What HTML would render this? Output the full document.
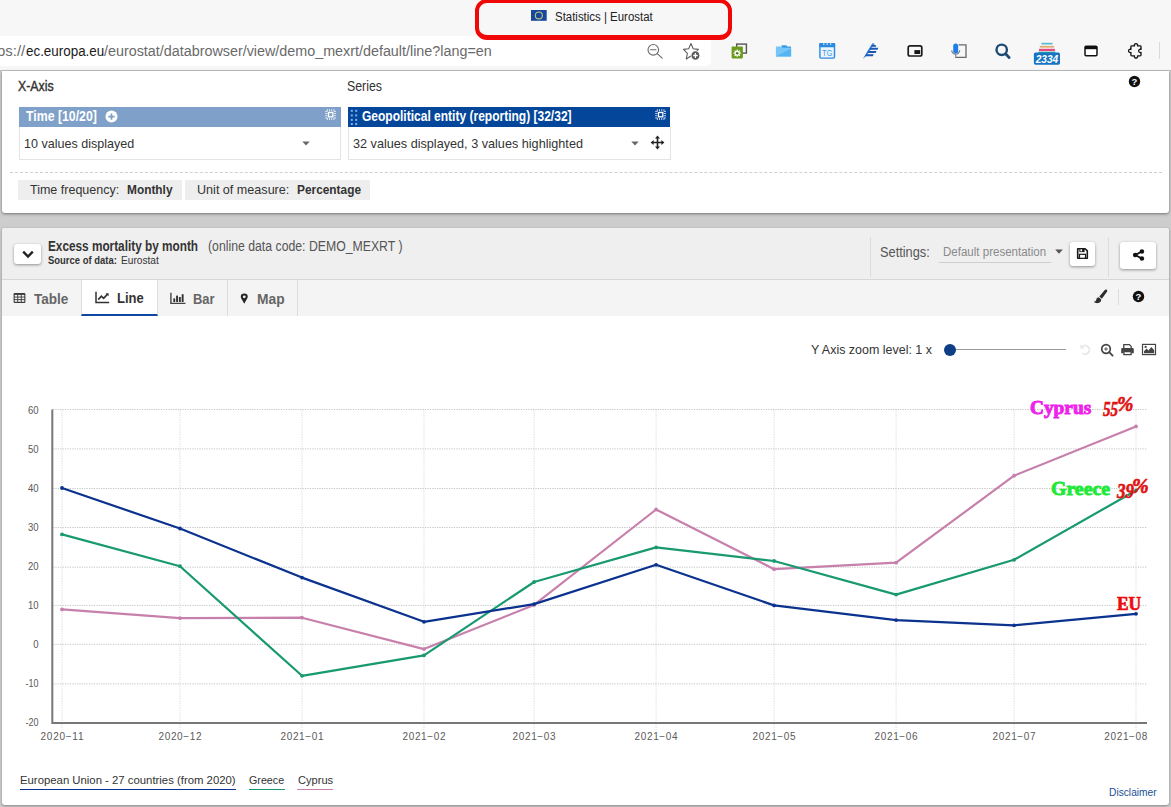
<!DOCTYPE html>
<html lang="en"><head><meta charset="utf-8"><title>Statistics | Eurostat</title>
<style>
*{box-sizing:border-box;margin:0;padding:0}
html,body{width:1171px;height:807px;overflow:hidden;background:#cdcdcd;font-family:"Liberation Sans",sans-serif;color:#333}
.a{position:absolute}
.t{position:absolute;white-space:nowrap;line-height:1;transform-origin:0 50%}
#chrome{left:0;top:0;width:1171px;height:70px;background:#f7f7f7}
#addr{left:-20px;top:36px;width:731px;height:30px;background:#fff;border-radius:0 5px 5px 0}
#chromeline{left:0;top:70px;width:1171px;height:1px;background:#c2c2c2}
#redbox{left:475px;top:-1.500px;width:257px;height:41px;border:4.800px solid #f00808;border-bottom-width:5.400px;border-radius:12px}
#card1{left:2px;top:71px;width:1167px;height:142px;background:#fff;border-radius:0 0 3px 3px;box-shadow:0 1px 3px rgba(0,0,0,.45)}
#card2{left:2px;top:228px;width:1167px;height:577px;background:#fff;border-radius:3px;box-shadow:0 1px 3px rgba(0,0,0,.35);overflow:hidden}
.hdr{height:20px;color:#fff;font-weight:bold}
.box{background:#fff;border:1px solid #e4e4e4;border-top:none}
.chip{background:#eee;height:20px;top:180px}
.btn{background:#fff;border-radius:3px;box-shadow:0 1px 3px rgba(0,0,0,.4)}
</style></head><body>
<div class="a" id="chrome"></div>
<div class="a" id="addr"></div>
<div class="a" id="chromeline"></div>
<div class="a" id="redbox"></div>
<div class="a" id="card1"></div>
<div class="a" id="card2"></div>

<!-- browser chrome -->
<svg class="a" style="left:531.200px;top:10.400px" width="15.700" height="10.800" viewBox="0 0 15.700 10.800"><rect width="15.700" height="10.800" fill="#17479e"/><circle cx="7.850" cy="5.400" r="3.500" fill="none" stroke="#c3cb72" stroke-width="1.050"/></svg>
<span class="t" id="tabtitle" style="left:555.3px;top:11px;font-size:12px;color:#222;transform:scaleX(0.953)">Statistics | Eurostat</span>
<span class="t" id="url1" style="left:-3.5px;top:44px;font-size:14px;color:#6a6a6a;transform:scaleX(1.069)">ps://</span>
<span class="t" id="url2" style="left:25.6px;top:44px;font-size:14px;color:#1b1b1b;transform:scaleX(0.957)">ec.europa.eu</span>
<span class="t" id="url3" style="left:104.3px;top:44px;font-size:14px;color:#6a6a6a;transform:scaleX(1.024)">/eurostat/databrowser/view/demo_mexrt/default/line?lang=en</span>

<!-- card 1 -->
<span class="t" id="xaxis" style="left:18.0px;top:79px;font-size:14px;color:#333;-webkit-text-stroke:0.400px #333;transform:scaleX(0.880)">X-Axis</span>
<span class="t" id="series" style="left:347.0px;top:79px;font-size:14px;color:#333;transform:scaleX(0.882)">Series</span>
<div class="a hdr" style="left:19px;top:107px;width:321.500px;background:#7fa1c9"></div>
<div class="a box" style="left:18.500px;top:127px;width:322.500px;height:33px"></div>
<span class="t" id="time" style="left:26.0px;top:109.200px;font-size:14px;font-weight:bold;color:#fff;transform:scaleX(0.878)">Time [10/20]</span>
<span class="t" id="v10" style="left:24.0px;top:137px;font-size:13.5px;color:#333;transform:scaleX(0.929)">10 values displayed</span>
<div class="a hdr" style="left:348px;top:107px;width:322px;background:#04469a"></div>
<div class="a box" style="left:347.500px;top:127px;width:323.500px;height:33px"></div>
<span class="t" id="geo" style="left:362.0px;top:109.100px;font-size:14px;font-weight:bold;color:#fff;transform:scaleX(0.858)">Geopolitical entity (reporting) [32/32]</span>
<span class="t" id="v32" style="left:352.5px;top:137px;font-size:13.5px;color:#333;transform:scaleX(0.937)">32 values displayed, 3 values highlighted</span>
<div class="a" style="left:10px;top:172px;width:1152px;height:0;border-top:1px dashed #d0d0d0"></div>
<div class="a chip" style="left:18px;width:164px"></div>
<div class="a chip" style="left:185px;width:185px"></div>
<span class="t" id="tf" style="left:29.7px;top:183px;font-size:13.5px;color:#333;transform:scaleX(0.926)">Time frequency:</span>
<span class="t" id="monthly" style="left:126.5px;top:183px;font-size:13.5px;font-weight:bold;color:#333;transform:scaleX(0.879)">Monthly</span>
<span class="t" id="um" style="left:197.2px;top:183px;font-size:13.5px;color:#333;transform:scaleX(0.932)">Unit of measure:</span>
<span class="t" id="pct" style="left:297.0px;top:183px;font-size:13.5px;font-weight:bold;color:#333;transform:scaleX(0.879)">Percentage</span>


<!-- card1 icons -->
<svg class="a" style="left:105px;top:110px" width="13" height="13" viewBox="0 0 13 13"><circle cx="6.5" cy="6.6" r="6" fill="#fff"/><path d="M3.3 6.6h6.4M6.5 3.4v6.4" stroke="#7fa1c9" stroke-width="1.8"/></svg>
<svg class="a" style="left:325px;top:108.500px" width="11.300" height="11.300" viewBox="0 0 11.300 11.300"><g fill="#fff" opacity="0.850"><rect x="1.9" y="0.200" width="0.900" height="2.200"/><rect x="1.9" y="8.900" width="0.900" height="2.200"/><rect x="0.200" y="1.9" width="2.200" height="0.900"/><rect x="8.900" y="1.9" width="2.200" height="0.900"/><rect x="4.1" y="0.200" width="0.900" height="2.200"/><rect x="4.1" y="8.900" width="0.900" height="2.200"/><rect x="0.200" y="4.1" width="2.200" height="0.900"/><rect x="8.900" y="4.1" width="2.200" height="0.900"/><rect x="6.3" y="0.200" width="0.900" height="2.200"/><rect x="6.3" y="8.900" width="0.900" height="2.200"/><rect x="0.200" y="6.3" width="2.200" height="0.900"/><rect x="8.900" y="6.3" width="2.200" height="0.900"/><rect x="8.5" y="0.200" width="0.900" height="2.200"/><rect x="8.5" y="8.900" width="0.900" height="2.200"/><rect x="0.200" y="8.5" width="2.200" height="0.900"/><rect x="8.900" y="8.5" width="2.200" height="0.900"/></g><rect x="3.500" y="3.500" width="4.300" height="4.300" fill="none" stroke="#fff" stroke-width="1.300"/></svg>
<svg class="a" style="left:655px;top:108.500px" width="11.300" height="11.300" viewBox="0 0 11.300 11.300"><g fill="#fff" opacity="0.850"><rect x="1.9" y="0.200" width="0.900" height="2.200"/><rect x="1.9" y="8.900" width="0.900" height="2.200"/><rect x="0.200" y="1.9" width="2.200" height="0.900"/><rect x="8.900" y="1.9" width="2.200" height="0.900"/><rect x="4.1" y="0.200" width="0.900" height="2.200"/><rect x="4.1" y="8.900" width="0.900" height="2.200"/><rect x="0.200" y="4.1" width="2.200" height="0.900"/><rect x="8.900" y="4.1" width="2.200" height="0.900"/><rect x="6.3" y="0.200" width="0.900" height="2.200"/><rect x="6.3" y="8.900" width="0.900" height="2.200"/><rect x="0.200" y="6.3" width="2.200" height="0.900"/><rect x="8.900" y="6.3" width="2.200" height="0.900"/><rect x="8.5" y="0.200" width="0.900" height="2.200"/><rect x="8.5" y="8.900" width="0.900" height="2.200"/><rect x="0.200" y="8.5" width="2.200" height="0.900"/><rect x="8.900" y="8.5" width="2.200" height="0.900"/></g><rect x="3.500" y="3.500" width="4.300" height="4.300" fill="none" stroke="#fff" stroke-width="1.300"/></svg>
<svg class="a" style="left:302px;top:140.500px" width="8" height="5" viewBox="0 0 8 5"><path d="M0.3 0.5h7.4L4 4.6z" fill="#666"/></svg>
<svg class="a" style="left:630.800px;top:140.500px" width="8" height="5" viewBox="0 0 8 5"><path d="M0.3 0.5h7.4L4 4.6z" fill="#666"/></svg>
<svg class="a" style="left:350px;top:109px" width="8" height="17" viewBox="0 0 8 17"><g fill="#7fb0ea"><rect x="0.8" y="0.8" width="2" height="2"/><rect x="5.2" y="0.8" width="2" height="2"/><rect x="0.8" y="5.4" width="2" height="2"/><rect x="5.2" y="5.4" width="2" height="2"/><rect x="0.8" y="9.9" width="2" height="2"/><rect x="5.2" y="9.9" width="2" height="2"/><rect x="0.8" y="14" width="2" height="2"/><rect x="5.2" y="14" width="2" height="2"/></g></svg>
<svg class="a" style="left:650px;top:135px" width="15" height="15" viewBox="0 0 15 15"><path d="M7.5 0.6L10 3.6H8.3V6.7H11.4V5L14.4 7.5L11.4 10V8.3H8.3V11.4H10L7.5 14.4L5 11.4H6.7V8.3H3.6V10L0.6 7.5L3.6 5V6.7H6.7V3.6H5z" fill="#222"/></svg>
<svg class="a" style="left:1128px;top:75px" width="13" height="13" viewBox="0 0 13 13"><circle cx="6.5" cy="6.5" r="5.7" fill="#111"/><text x="6.5" y="10" font-size="9.5" font-weight="bold" font-family="Liberation Sans, sans-serif" fill="#fff" text-anchor="middle">?</text></svg>


<!-- chrome icons -->
<svg class="a" style="left:645px;top:42px" width="20" height="18" viewBox="0 0 20 18"><circle cx="8.3" cy="7.8" r="5.3" fill="none" stroke="#6b6b6b" stroke-width="1.1"/><path d="M5.6 7.8h5.4M12.2 11.6l5 4.6" stroke="#6b6b6b" stroke-width="1.1" fill="none" stroke-linecap="round"/></svg>
<svg class="a" style="left:682px;top:42px" width="20.500" height="21" viewBox="0 0 22 21" preserveAspectRatio="none"><path d="M9.6 1.6l2.4 5.2 5.6.6-4.2 3.9 1.2 5.6-5-2.9-5 2.9 1.2-5.6L1.6 7.4l5.6-.6z" fill="none" stroke="#555" stroke-width="1.1" stroke-linejoin="round"/><circle cx="14.400" cy="13.500" r="5" fill="#fff"/><circle cx="14.400" cy="13.500" r="4.300" fill="#5a5a5a"/><path d="M12 13.500h4.800M14.400 11.100v4.800" stroke="#fff" stroke-width="1.300"/></svg>
<svg class="a" style="left:730px;top:42px" width="18" height="18" viewBox="0 0 18 18"><rect x="6.700" y="2.100" width="9.700" height="9" fill="none" stroke="#555" stroke-width="1.400"/><rect x="1.600" y="4.600" width="11.300" height="11.800" rx="0.800" fill="#6c9c1e"/><path d="M10.84 10.56L10.84 11.84L9.73 11.81L9.42 12.56L10.23 13.33L9.33 14.23L8.56 13.42L7.81 13.73L7.84 14.84L6.56 14.84L6.59 13.73L5.84 13.42L5.07 14.23L4.17 13.33L4.98 12.56L4.67 11.81L3.56 11.84L3.56 10.56L4.67 10.59L4.98 9.84L4.17 9.07L5.07 8.17L5.84 8.98L6.59 8.67L6.56 7.56L7.84 7.56L7.81 8.67L8.56 8.98L9.33 8.17L10.23 9.07L9.42 9.84L9.73 10.59Z" fill="#fff"/><circle cx="7.200" cy="11.200" r="1.250" fill="#55741e"/></svg>
<svg class="a" style="left:774px;top:43px" width="19" height="16" viewBox="0 0 19 16"><path d="M7.600 2.200h4.600l1.200 1.400h3.600v2.400H7.600z" fill="#3d9be6"/><path d="M1.900 3.400h5.200l1.400 1.300h8.600v8.900H1.900z" fill="#78c6f8"/><path d="M1.900 13.600L17.100 5.600v8z" fill="#55b4f3"/></svg>
<svg class="a" style="left:817px;top:41px" width="20" height="19" viewBox="0 0 20 19"><rect x="2.900" y="2.800" width="14.600" height="14.300" rx="1" fill="#eaf4fd" stroke="#2b8ae0" stroke-width="1.400"/><rect x="2.200" y="2.100" width="16" height="4.200" rx="1" fill="#2b8ae0"/><path d="M6.800 2.300v1.600M10.200 2.300v1.600M13.600 2.300v1.600" stroke="#bfe0fa" stroke-width="1.300"/><text x="5.300" y="14.700" font-size="8.700" font-family="Liberation Sans, sans-serif" fill="#3d9be6" textLength="9.900" lengthAdjust="spacingAndGlyphs">TG</text></svg>
<svg class="a" style="left:861px;top:41px" width="20" height="19" viewBox="0 0 20 19"><path d="M2 17.800L11.600 1.900 13.800 3.100 10.800 6.600 9.400 9.200 7.400 12.200 5.200 15.200z" fill="#3f8fe2"/><path d="M2 17.800L11.600 1.900 9.400 6.400 6.600 11.400z" fill="#2a6fcc"/><path d="M11 3.900h3.600l.7 1.900H9.900zM9.600 6.800h7.800l-.9 2H8.600zM7.600 10h7.900l-.9 2H6.500zM5.400 13.300h7.300l-.9 2H4.200z" fill="#1c58b2"/></svg>
<svg class="a" style="left:905px;top:43px" width="20" height="16" viewBox="0 0 20 16"><rect x="3.200" y="2.900" width="13.600" height="10.100" rx="1.800" fill="none" stroke="#1c1c1c" stroke-width="1.700"/><rect x="9.400" y="7.100" width="5.800" height="3.900" fill="#161616"/></svg>
<svg class="a" style="left:949px;top:42px" width="20" height="18" viewBox="0 0 20 18"><path d="M9.600 2.900h7.400v12.500H6.200" fill="none" stroke="#6a6a6a" stroke-width="1.300"/><rect x="4.200" y="1.600" width="5" height="9.800" rx="2.500" fill="#1e7fe8"/><path d="M2.700 8.200a4 4 0 0 0 8 0M6.700 12.200v2.600" fill="none" stroke="#7a8794" stroke-width="1.200"/></svg>
<svg class="a" style="left:993px;top:41px" width="20" height="20" viewBox="0 0 20 20"><circle cx="8.7" cy="8.8" r="5.2" fill="none" stroke="#1d4a73" stroke-width="2.4"/><path d="M12.6 12.8l3.6 3.8" stroke="#1d4a73" stroke-width="2.8" stroke-linecap="round"/></svg>
<svg class="a" style="left:1033px;top:42px" width="28" height="24" viewBox="0 0 28 24"><rect x="8.400" y="0.800" width="11.100" height="1.700" fill="#55bccf"/><rect x="6.800" y="3.900" width="14.300" height="1.700" fill="#e2a868"/><rect x="6" y="6.800" width="15.900" height="2.200" fill="#e8497c"/><rect x="5.400" y="9.600" width="17" height="1.400" fill="#3aa6a0"/><rect x="0.900" y="10.600" width="26.100" height="12.100" rx="1.600" fill="#1574c4"/><text id="n2334" x="14" y="20.800" font-size="10.500" font-weight="bold" font-style="italic" font-family="Liberation Sans, sans-serif" fill="#fff" text-anchor="middle" textLength="22.500" lengthAdjust="spacingAndGlyphs">2334</text></svg>
<svg class="a" style="left:1082px;top:43px" width="18" height="16" viewBox="0 0 18 16"><rect x="1.6" y="1.8" width="14.8" height="12.4" fill="#fff"/><rect x="3" y="3.2" width="12" height="9.6" rx="1" fill="#fff" stroke="#111" stroke-width="1.5"/><rect x="3" y="3" width="12" height="3.2" fill="#111"/></svg>
<svg class="a" style="left:1126px;top:42px" width="19" height="19" viewBox="0 0 19 19"><path d="M5.700 3.900H8.500A1.650 1.650 0 1 1 11.500 3.900H14.200Q15 3.900 15 4.700V7.400A1.650 1.650 0 1 0 15 10.400V13.100Q15 13.900 14.200 13.900H11.500A1.650 1.650 0 1 1 8.500 13.900H5.700Q4.900 13.900 4.900 13.100V10.400A1.650 1.650 0 1 1 4.900 7.400V4.700Q4.900 3.900 5.700 3.900Z" fill="none" stroke="#161616" stroke-width="1.350" stroke-linejoin="round"/></svg>
<div class="a" style="left:1159px;top:42px;width:1px;height:17px;background:#d9d9d9"></div>


<!-- card2 header -->
<div class="a" style="left:2px;top:228px;width:1167px;height:51px;background:#efefef;border-radius:3px 3px 0 0"></div>
<div class="a" style="left:2px;top:279px;width:1167px;height:1px;background:#d6d6d6"></div>
<div class="a" style="left:2px;top:280px;width:1167px;height:36px;background:#f4f4f4"></div>
<div class="a btn" style="left:14px;top:244px;width:27px;height:20px"></div>
<svg class="a" style="left:21px;top:249px" width="14" height="11" viewBox="0 0 14 11"><path d="M2.200 2.700L7 7.500l4.800-4.800" fill="none" stroke="#222" stroke-width="2.400"/></svg>
<span class="t" id="title" style="left:47.6px;top:239.0px;font-size:14px;font-weight:bold;color:#333;transform:scaleX(0.842)">Excess mortality by month</span>
<span class="t" id="code" style="left:207.5px;top:239.2px;font-size:14px;color:#555;transform:scaleX(0.876)">(online data code: DEMO_MEXRT )</span>
<span class="t" id="src" style="left:47.6px;top:255.6px;font-size:10px;font-weight:bold;color:#333;transform:scaleX(0.946)">Source of data<span>:</span></span>
<span class="t" id="src2" style="left:120.5px;top:255.6px;font-size:10px;color:#333;transform:scaleX(1.015)">Eurostat</span>
<div class="a" style="left:870px;top:237px;width:1px;height:40px;background:#dcdcdc"></div>
<span class="t" id="settings" style="left:879.5px;top:245.2px;font-size:14.5px;color:#555;transform:scaleX(0.881)">Settings:</span>
<span class="t" id="defpres" style="left:942.6px;top:246.2px;font-size:12.5px;color:#8a8a8a;transform:scaleX(0.922)">Default presentation</span>
<div class="a" style="left:939px;top:262px;width:112px;height:1px;background:#cfcfcf"></div>
<svg class="a" style="left:1055px;top:249px" width="8" height="5" viewBox="0 0 8 5"><path d="M0.2 0.4h7.6L4 4.7z" fill="#555"/></svg>
<div class="a btn" style="left:1070px;top:242px;width:25px;height:24px"></div>
<svg class="a" style="left:1076px;top:247px" width="13" height="13" viewBox="0 0 13 13"><path d="M1.700 1.700h7.400l2.200 2.200v7.400h-9.600z" fill="#fff" stroke="#1a1a1a" stroke-width="1.600" stroke-linejoin="round"/><rect x="3.400" y="1.700" width="5.200" height="3.400" fill="#1a1a1a"/><rect x="4.400" y="2.300" width="1.700" height="2" fill="#fff"/><rect x="3.500" y="7.300" width="6" height="4" fill="#fff" stroke="#1a1a1a" stroke-width="1.200"/></svg>
<div class="a" style="left:1108px;top:237px;width:1px;height:40px;background:#dcdcdc"></div>
<div class="a btn" style="left:1120px;top:242px;width:36px;height:27px"></div>
<svg class="a" style="left:1132px;top:248.500px" width="13" height="12" viewBox="0 0 13 12"><path d="M9.800 2.500L3.300 6l6.500 3.500" fill="none" stroke="#111" stroke-width="1.900"/><circle cx="9.900" cy="2.500" r="2.250" fill="#111"/><circle cx="3.200" cy="6" r="2.250" fill="#111"/><circle cx="9.900" cy="9.500" r="2.250" fill="#111"/></svg>

<!-- tabs -->
<div class="a" style="left:81px;top:280px;width:77px;height:36px;background:#fff;border-left:1px solid #ddd;border-right:1px solid #ddd;border-bottom:2px solid #0e47a1"></div>
<div class="a" style="left:227px;top:280px;width:1px;height:36px;background:#ddd"></div>
<div class="a" style="left:297px;top:280px;width:1px;height:36px;background:#ddd"></div>
<svg class="a" style="left:13.300px;top:291.500px" width="13" height="12" viewBox="0 0 13 12"><rect x="0.600" y="1" width="11.800" height="10" rx="1" fill="#3a3a3a"/><g fill="#f4f4f4"><rect x="1.700" y="2.900" width="2.600" height="1.700"/><rect x="5.200" y="2.900" width="2.600" height="1.700"/><rect x="8.700" y="2.900" width="2.600" height="1.700"/><rect x="1.700" y="5.500" width="2.600" height="1.700"/><rect x="5.200" y="5.500" width="2.600" height="1.700"/><rect x="8.700" y="5.500" width="2.600" height="1.700"/><rect x="1.700" y="8.100" width="2.600" height="1.700"/><rect x="5.200" y="8.100" width="2.600" height="1.700"/><rect x="8.700" y="8.100" width="2.600" height="1.700"/></g></svg>
<span class="t" id="ttable" style="left:33.8px;top:291.6px;font-size:14px;font-weight:bold;color:#666;transform:scaleX(0.965)">Table</span>
<svg class="a" style="left:95px;top:290.700px" width="15" height="13" viewBox="0 0 15 13"><path d="M1 0.800v10.600h13.200" fill="none" stroke="#333" stroke-width="1.500"/><path d="M3.200 8.600l3.200-3.400 2.200 2.200 4-4.200" fill="none" stroke="#333" stroke-width="1.700"/><path d="M10.600 2.200h3v3z" fill="#333"/></svg>
<span class="t" id="tline" style="left:117.3px;top:291.2px;font-size:14px;font-weight:bold;color:#333;transform:scaleX(0.928)">Line</span>
<svg class="a" style="left:170px;top:292px" width="16" height="13" viewBox="0 0 16 13"><path d="M0.900 0.800v10.600h14.600" fill="none" stroke="#444" stroke-width="1.400"/><g fill="#333"><rect x="3.300" y="6.400" width="1.900" height="3.600"/><rect x="6.100" y="3.600" width="1.900" height="6.400"/><rect x="8.900" y="5" width="1.900" height="5"/><rect x="11.700" y="2.200" width="1.900" height="7.800"/></g></svg>
<span class="t" id="tbar" style="left:193.0px;top:291.6px;font-size:14px;font-weight:bold;color:#666;transform:scaleX(0.925)">Bar</span>
<svg class="a" style="left:240.300px;top:293.200px" width="8.500" height="11.500" viewBox="0 0 9 13" preserveAspectRatio="none"><path d="M4.500 0.600a3.700 3.700 0 0 1 3.700 3.700c0 2.200-2.300 4.600-3.700 7.800C3.100 8.900 0.800 6.500 0.800 4.300A3.700 3.700 0 0 1 4.500 0.600z" fill="#252525"/><circle cx="4.500" cy="4.300" r="1.500" fill="#f4f4f4"/></svg>
<span class="t" id="tmap" style="left:256.7px;top:291.6px;font-size:14px;font-weight:bold;color:#666;transform:scaleX(0.986)">Map</span>
<svg class="a" style="left:1093px;top:289px" width="15" height="15" viewBox="0 0 15 15"><path d="M13.700 0.700c.8.600.7 1.500.1 2.300L8.900 9.700 6.300 7.600 11.800 1.100c.5-.7 1.300-.8 1.900-.4z" fill="#2e2e2e"/><path d="M5.700 8.300l2.400 2c.3 1.800-.7 3.300-2.800 3.800-1.700.4-3.500-.1-4.600-1.300 1.600-.1 2.300-.9 2.600-2.300.3-1.300 1.200-2.100 2.400-2.200z" fill="#2e2e2e"/></svg>
<div class="a" style="left:1118px;top:289px;width:1px;height:16px;background:#ddd"></div>
<svg class="a" style="left:1132px;top:290px" width="13" height="13" viewBox="0 0 13 13"><circle cx="6.500" cy="6.500" r="5.700" fill="#111"/><text x="6.500" y="10" font-size="9.500" font-weight="bold" font-family="Liberation Sans, sans-serif" fill="#fff" text-anchor="middle">?</text></svg>

<!-- zoom toolbar -->
<span class="t" id="yzoom" style="left:811.0px;top:342.9px;font-size:13.500px;color:#333;transform:scaleX(0.923)">Y Axis zoom level: 1 x</span>
<div class="a" style="left:950px;top:349px;width:116px;height:1px;background:#9a9a9a"></div>
<div class="a" style="left:943.500px;top:343.500px;width:12.500px;height:12.500px;border-radius:50%;background:#0e3f86"></div>

<svg class="a" id="chart" style="left:0;top:390px" width="1171" height="360" viewBox="0 390 1171 360" font-family="Liberation Sans, sans-serif">
<path d="M53 683.9H1146.500M53 644.3H1146.500M53 605.4H1146.500M53 567.2H1146.500M53 527.5H1146.500M53 488.5H1146.500M53 448.9H1146.500M53 409.5H1146.500" fill="none" stroke="#c4c4c4" stroke-width="1" stroke-dasharray="1.200 1.200"/>
<path d="M62.0 410V731.500M180.0 410V731.500M302.0 410V731.500M424.0 410V731.500M534.1 410V731.500M656.1 410V731.500M774.1 410V731.500M896.1 410V731.500M1014.1 410V731.500M1136.0 410V731.500" fill="none" stroke="#dadada" stroke-width="1" stroke-dasharray="1.200 1.200"/>
<path d="M52.300 409.500V722.900H1147" fill="none" stroke="#777" stroke-width="2"/>
<text x="38.500" y="414.2" font-size="10.400" fill="#5a5a5a" text-anchor="end" textLength="10.6" lengthAdjust="spacingAndGlyphs">60</text>
<text x="38.500" y="453.2" font-size="10.400" fill="#5a5a5a" text-anchor="end" textLength="10.6" lengthAdjust="spacingAndGlyphs">50</text>
<text x="38.500" y="492.2" font-size="10.400" fill="#5a5a5a" text-anchor="end" textLength="10.6" lengthAdjust="spacingAndGlyphs">40</text>
<text x="38.500" y="531.2" font-size="10.400" fill="#5a5a5a" text-anchor="end" textLength="10.6" lengthAdjust="spacingAndGlyphs">30</text>
<text x="38.500" y="570.2" font-size="10.400" fill="#5a5a5a" text-anchor="end" textLength="10.6" lengthAdjust="spacingAndGlyphs">20</text>
<text x="38.500" y="609.2" font-size="10.400" fill="#5a5a5a" text-anchor="end" textLength="10.6" lengthAdjust="spacingAndGlyphs">10</text>
<text x="38.500" y="648.2" font-size="10.400" fill="#5a5a5a" text-anchor="end" textLength="5.3" lengthAdjust="spacingAndGlyphs">0</text>
<text x="38.500" y="687.2" font-size="10.400" fill="#5a5a5a" text-anchor="end" textLength="13.0" lengthAdjust="spacingAndGlyphs">-10</text>
<text x="38.500" y="726.2" font-size="10.400" fill="#5a5a5a" text-anchor="end" textLength="13.0" lengthAdjust="spacingAndGlyphs">-20</text>
<text x="62.0" y="740.300" font-size="10" fill="#5a5a5a" text-anchor="middle" textLength="43" lengthAdjust="spacing">2020−11</text>
<text x="180.0" y="740.300" font-size="10" fill="#5a5a5a" text-anchor="middle" textLength="43" lengthAdjust="spacing">2020−12</text>
<text x="302.0" y="740.300" font-size="10" fill="#5a5a5a" text-anchor="middle" textLength="43" lengthAdjust="spacing">2021−01</text>
<text x="424.0" y="740.300" font-size="10" fill="#5a5a5a" text-anchor="middle" textLength="43" lengthAdjust="spacing">2021−02</text>
<text x="534.1" y="740.300" font-size="10" fill="#5a5a5a" text-anchor="middle" textLength="43" lengthAdjust="spacing">2021−03</text>
<text x="656.1" y="740.300" font-size="10" fill="#5a5a5a" text-anchor="middle" textLength="43" lengthAdjust="spacing">2021−04</text>
<text x="774.1" y="740.300" font-size="10" fill="#5a5a5a" text-anchor="middle" textLength="43" lengthAdjust="spacing">2021−05</text>
<text x="896.1" y="740.300" font-size="10" fill="#5a5a5a" text-anchor="middle" textLength="43" lengthAdjust="spacing">2021−06</text>
<text x="1014.1" y="740.300" font-size="10" fill="#5a5a5a" text-anchor="middle" textLength="43" lengthAdjust="spacing">2021−07</text>
<text x="1147.3" y="740.300" font-size="10" fill="#5a5a5a" text-anchor="end" textLength="43" lengthAdjust="spacing">2021−08</text>
<polyline points="62.0,609.4 180.0,618.2 302.0,617.7 424.0,649.1 534.1,604.9 656.1,509.5 774.1,569.2 896.1,562.7 1014.1,475.7 1136.0,426.4" fill="none" stroke="#c77fac" stroke-width="2.200" stroke-linejoin="round"/>
<circle cx="62.0" cy="609.4" r="1.900" fill="#c77fac"/>
<circle cx="180.0" cy="618.2" r="1.900" fill="#c77fac"/>
<circle cx="302.0" cy="617.7" r="1.900" fill="#c77fac"/>
<circle cx="424.0" cy="649.1" r="1.900" fill="#c77fac"/>
<circle cx="534.1" cy="604.9" r="1.900" fill="#c77fac"/>
<circle cx="656.1" cy="509.5" r="1.900" fill="#c77fac"/>
<circle cx="774.1" cy="569.2" r="1.900" fill="#c77fac"/>
<circle cx="896.1" cy="562.7" r="1.900" fill="#c77fac"/>
<circle cx="1014.1" cy="475.7" r="1.900" fill="#c77fac"/>
<circle cx="1136.0" cy="426.4" r="1.900" fill="#c77fac"/>
<polyline points="62.0,534.4 180.0,566.2 302.0,675.8 424.0,655.3 534.1,582.0 656.1,547.4 774.1,561.0 896.1,594.6 1014.1,559.8 1136.0,490.5" fill="none" stroke="#18996f" stroke-width="2.200" stroke-linejoin="round"/>
<circle cx="62.0" cy="534.4" r="1.900" fill="#18996f"/>
<circle cx="180.0" cy="566.2" r="1.900" fill="#18996f"/>
<circle cx="302.0" cy="675.8" r="1.900" fill="#18996f"/>
<circle cx="424.0" cy="655.3" r="1.900" fill="#18996f"/>
<circle cx="534.1" cy="582.0" r="1.900" fill="#18996f"/>
<circle cx="656.1" cy="547.4" r="1.900" fill="#18996f"/>
<circle cx="774.1" cy="561.0" r="1.900" fill="#18996f"/>
<circle cx="896.1" cy="594.6" r="1.900" fill="#18996f"/>
<circle cx="1014.1" cy="559.8" r="1.900" fill="#18996f"/>
<circle cx="1136.0" cy="490.5" r="1.900" fill="#18996f"/>
<polyline points="62.0,488.0 180.0,528.5 302.0,577.6 424.0,621.8 534.1,604.1 656.1,564.8 774.1,605.4 896.1,620.1 1014.1,625.3 1136.0,613.8" fill="none" stroke="#0a328e" stroke-width="2.200" stroke-linejoin="round"/>
<circle cx="62.0" cy="488.0" r="1.900" fill="#0a328e"/>
<circle cx="180.0" cy="528.5" r="1.900" fill="#0a328e"/>
<circle cx="302.0" cy="577.6" r="1.900" fill="#0a328e"/>
<circle cx="424.0" cy="621.8" r="1.900" fill="#0a328e"/>
<circle cx="534.1" cy="604.1" r="1.900" fill="#0a328e"/>
<circle cx="656.1" cy="564.8" r="1.900" fill="#0a328e"/>
<circle cx="774.1" cy="605.4" r="1.900" fill="#0a328e"/>
<circle cx="896.1" cy="620.1" r="1.900" fill="#0a328e"/>
<circle cx="1014.1" cy="625.3" r="1.900" fill="#0a328e"/>
<circle cx="1136.0" cy="613.8" r="1.900" fill="#0a328e"/>
</svg>
<!-- toolbar icons -->
<svg class="a" style="left:1079px;top:343px" width="14" height="13" viewBox="0 0 14 13"><path d="M3.200 3.600A4.300 4.300 0 1 1 3.400 10.200" fill="none" stroke="#e6e6e6" stroke-width="1.700"/><path d="M1.400 1.200v4.200h4.200z" fill="#e6e6e6"/></svg>
<svg class="a" style="left:1100px;top:343px" width="14" height="14" viewBox="0 0 14 14"><circle cx="6" cy="6" r="4.300" fill="none" stroke="#444" stroke-width="1.700"/><path d="M9.200 9.200l3.400 3.400" stroke="#444" stroke-width="1.800" stroke-linecap="round"/><path d="M4.200 6h3.600M6 4.200v3.600" stroke="#555" stroke-width="1"/></svg>
<svg class="a" style="left:1120px;top:343px" width="15" height="13" viewBox="0 0 15 13"><path d="M3.800 1.600h5.600l1.800 1.800v2.400h-7.400z" fill="none" stroke="#444" stroke-width="1.300"/><path d="M1.200 6.300a1.300 1.300 0 0 1 1.300-1.300h10a1.300 1.300 0 0 1 1.300 1.300v3.900h-2.400v-2h-7.800v2h-2.400z" fill="#444"/><rect x="3.900" y="8.600" width="7.200" height="3" fill="none" stroke="#444" stroke-width="1.300"/></svg>
<svg class="a" style="left:1141px;top:343px" width="16" height="13" viewBox="0 0 16 13"><rect x="1.500" y="1.400" width="13" height="10.200" fill="#fff" stroke="#444" stroke-width="1.200"/><path d="M3 10.200v-2l2.600-2.600 1.800 1.800 3-3.400 2.800 3.200v3z" fill="#444"/><circle cx="4.600" cy="3.900" r="1.100" fill="#444"/></svg>
<!-- annotations -->
<span class="t" id="acy" style="left:1029.5px;top:397.500px;font-size:19px;font-family:'Liberation Serif',serif;font-weight:bold;color:#ee22ea;-webkit-text-stroke:0.900px #ee22ea;transform:scaleX(1.017)">Cyprus</span>
<span class="t" id="a55" style="left:1103.2px;top:398.500px;font-size:20.500px;font-family:'Liberation Serif',serif;font-weight:bold;font-style:italic;color:#e01212;-webkit-text-stroke:0.650px #e01212;transform:scaleX(0.732)">55</span>
<span class="t" id="a55p" style="left:1116.6px;top:393.500px;font-size:20.500px;font-family:'Liberation Serif',serif;font-weight:bold;font-style:italic;color:#e01212;-webkit-text-stroke:0.650px #e01212;transform:scaleX(0.960)">%</span>
<span class="t" id="agr" style="left:1050.5px;top:478.500px;font-size:19px;font-family:'Liberation Serif',serif;font-weight:bold;color:#22e83a;-webkit-text-stroke:0.900px #22e83a;transform:scaleX(1.044)">Greece</span>
<span class="t" id="a39" style="left:1117.0px;top:480.500px;font-size:20.500px;font-family:'Liberation Serif',serif;font-weight:bold;font-style:italic;color:#e01212;-webkit-text-stroke:0.650px #e01212;transform:scaleX(0.829)">39</span>
<span class="t" id="a39p" style="left:1131.7px;top:475.500px;font-size:20.500px;font-family:'Liberation Serif',serif;font-weight:bold;font-style:italic;color:#e01212;-webkit-text-stroke:0.650px #e01212;transform:scaleX(0.978)">%</span>
<span class="t" id="aeu" style="left:1116.6px;top:593.700px;font-size:19px;font-family:'Liberation Serif',serif;font-weight:bold;color:#ec0c0c;-webkit-text-stroke:0.700px #ec0c0c;transform:scaleX(0.916)">EU</span>
<!-- legend -->
<span class="t" id="leu" style="left:20.4px;top:775.1px;font-size:11px;color:#333;transform:scaleX(1.031)">European Union - 27 countries (from 2020)</span>
<div class="a" style="left:20px;top:789px;width:216px;height:1px;background:#0a328e"></div>
<span class="t" id="lgr" style="left:249.3px;top:775.1px;font-size:11px;color:#333;transform:scaleX(0.973)">Greece</span>
<div class="a" style="left:249px;top:789px;width:36px;height:1px;background:#18996f"></div>
<span class="t" id="lcy" style="left:297.5px;top:775.1px;font-size:11px;color:#333;transform:scaleX(1.007)">Cyprus</span>
<div class="a" style="left:297px;top:789px;width:36px;height:1px;background:#c77fac"></div>
<span class="t" id="disc" style="left:1108.8px;top:787.4px;font-size:10.500px;color:#1a4f95;transform:scaleX(0.973)">Disclaimer</span>

<!--CONTENT4-->
</body></html>
